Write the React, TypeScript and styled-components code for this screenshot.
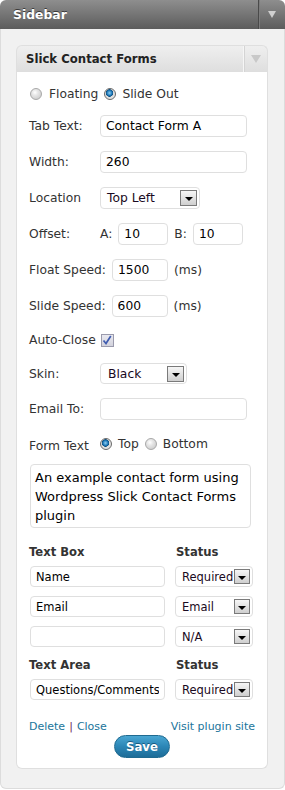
import React from "react";
import styled, { createGlobalStyle } from "styled-components";

const Global = createGlobalStyle`
  html, body { margin: 0; padding: 0; background: #fff; }
  body { font-family: "DejaVu Sans", Verdana, sans-serif; color: #333; }
  * { box-sizing: border-box; }
`;

const Outer = styled.div`
  width: 285px;
  display: flex;
  flex-direction: column;
`;

const OuterHeader = styled.div`
  height: 29px;
  display: flex;
  align-items: stretch;
  background: linear-gradient(#8e8e8e, #5c5c5c);
  border-radius: 6px 6px 0 0;
`;

const OuterTitle = styled.div`
  flex: 1;
  display: flex;
  align-items: center;
  padding-left: 13px;
  color: #fff;
  font-weight: bold;
  font-size: 12.4px;
  text-shadow: 0 -1px 0 #3a3a3a;
`;

const HeaderToggle = styled.div<{ $light?: boolean }>`
  width: ${(p) => (p.$light ? 24 : 27)}px;
  display: flex;
  align-items: center;
  justify-content: center;
  border-left: 1px solid ${(p) => (p.$light ? "#f6f6f6" : "#4a4a4a")};
  box-shadow: inset 1px 0 0 ${(p) => (p.$light ? "#d4d4d4" : "#7c7c7c")};
`;

const Triangle = styled.span<{ $color: string; $w: number; $h: number }>`
  width: 0;
  height: 0;
  border-left: ${(p) => p.$w / 2}px solid transparent;
  border-right: ${(p) => p.$w / 2}px solid transparent;
  border-top: ${(p) => p.$h}px solid ${(p) => p.$color};
`;

const OuterBody = styled.div`
  background: #f1f1f1;
  border: 1px solid #dcdcdc;
  border-top: none;
  border-radius: 0 0 6px 6px;
  padding: 16px 16px 19px 15px;
`;

const Widget = styled.div`
  width: 252px;
  display: flex;
  flex-direction: column;
`;

const WidgetTitle = styled.div`
  height: 27px;
  display: flex;
  align-items: stretch;
  background: linear-gradient(#efefef, #dedede);
  border: 1px solid #dfdfdf;
  border-bottom: none;
  border-radius: 6px 6px 0 0;
`;

const WidgetTitleText = styled.div`
  flex: 1;
  display: flex;
  align-items: center;
  padding-left: 9px;
  font-weight: bold;
  font-size: 11.7px;
  color: #222;
`;

const WidgetBody = styled.div`
  background: #fff;
  border: 1px solid #dfdfdf;
  border-top: none;
  border-radius: 0 0 6px 6px;
  padding: 11px 0 10px 12px;
  display: flex;
  flex-direction: column;
`;

const Row = styled.div<{ $h?: number; $mt?: number }>`
  display: flex;
  align-items: center;
  height: ${(p) => p.$h ?? 22}px;
  margin-top: ${(p) => p.$mt ?? 14}px;
  font-size: 12.3px;
  color: #333;
`;

const Label = styled.span<{ $w?: number }>`
  width: ${(p) => (p.$w ? `${p.$w}px` : "auto")};
  flex: none;
  margin-right: ${(p) => (p.$w ? 0 : 6)}px;
  white-space: nowrap;
`;

const Text = styled.span<{ $ml?: number; $mr?: number }>`
  margin-left: ${(p) => p.$ml ?? 0}px;
  margin-right: ${(p) => p.$mr ?? 0}px;
  white-space: nowrap;
`;

const Input = styled.input<{ $w: number; $h?: number; $fs?: number }>`
  width: ${(p) => p.$w}px;
  height: ${(p) => p.$h ?? 22}px;
  border: 1px solid #dfdfdf;
  border-radius: 4px;
  padding: 0 5px;
  font-family: "DejaVu Sans", Verdana, sans-serif;
  font-size: ${(p) => p.$fs ?? 12.3}px;
  color: #000;
  background: #fff;
  outline: none;
  margin: 0;
`;

const SelectBox = styled.div<{ $w: number; $h?: number; $fs?: number; $pl?: number }>`
  width: ${(p) => p.$w}px;
  height: ${(p) => p.$h ?? 22}px;
  border: 1px solid #dfdfdf;
  border-radius: 4px;
  display: flex;
  align-items: center;
  justify-content: space-between;
  padding: 0 2px 0 ${(p) => p.$pl ?? 6}px;
  font-size: ${(p) => p.$fs ?? 12.3}px;
  color: #1a0a22;
  background: #fff;
  white-space: nowrap;
`;

const ArrowBtn = styled.span<{ $w: number; $h: number }>`
  width: ${(p) => p.$w}px;
  height: ${(p) => p.$h}px;
  flex: none;
  border: 1px solid #7a7a7a;
  background: linear-gradient(#f6f6f6, #cfcfcf);
  display: flex;
  align-items: center;
  justify-content: center;
  padding-top: 2px;
`;

const Radio = styled.span<{ $on?: boolean }>`
  width: 12px;
  height: 12px;
  flex: none;
  border-radius: 50%;
  border: 1px solid ${(p) => (p.$on ? "#6a6a6a" : "#a8a8a8")};
  background: ${(p) =>
    p.$on
      ? "radial-gradient(circle at 45% 40%, #8fd0f4 0, #1e78b8 2.5px, #0d4f80 3.5px, #dcdcdc 4px, #f4f4f4 100%)"
      : "radial-gradient(circle at 40% 35%, #ffffff 0, #e6e6e6 3px, #c4c4c4 100%)"};
`;

const Check = styled.span`
  width: 13px;
  height: 13px;
  flex: none;
  border: 1px solid #9a9aac;
  background: linear-gradient(#e9e9f0, #d2d2dc);
  display: flex;
  align-items: center;
  justify-content: center;
`;

const TextArea = styled.textarea`
  width: 221px;
  height: 64px;
  margin: 10px 0 0 1px;
  border: 1px solid #dfdfdf;
  border-radius: 4px;
  padding: 3px 4px;
  font-family: "DejaVu Sans", Verdana, sans-serif;
  font-size: 13px;
  line-height: 19px;
  color: #000;
  resize: none;
  overflow: hidden;
  outline: none;
  display: block;
`;

const Table = styled.div`
  display: grid;
  grid-template-columns: 135px 78px;
  column-gap: 10px;
  margin-left: 1px;
  align-items: center;
`;

const ColHead = styled.div<{ $mt: number; $ml?: number }>`
  font-weight: bold;
  font-size: 11.6px;
  color: #333;
  height: 18px;
  display: flex;
  align-items: center;
  margin-top: ${(p) => p.$mt}px;
  margin-left: ${(p) => p.$ml ?? -1}px;
  margin-bottom: 5px;
`;

const Cell = styled.div`
  margin-bottom: 9px;
  display: flex;
`;

const Footer = styled.div`
  display: flex;
  justify-content: space-between;
  align-items: center;
  height: 14px;
  margin-top: 10px;
  padding-right: 12px;
  font-size: 11px;
`;

const Link = styled.a`
  color: #21759b;
  text-decoration: none;
`;

const Sep = styled.span`
  color: #6b2d5c;
  margin: 0 4px;
`;

const SaveWrap = styled.div`
  display: flex;
  justify-content: center;
  margin: 2px 0 0 -12px;
`;

const SaveButton = styled.button`
  width: 56px;
  height: 23px;
  border-radius: 12px;
  border: 1px solid #1f6a90;
  background: linear-gradient(#4aa6d2, #2b86b6 50%, #1d6c98);
  color: #fff;
  font-family: "DejaVu Sans", Verdana, sans-serif;
  font-weight: bold;
  font-size: 11.7px;
  text-shadow: 0 -1px 0 #1a5a80;
  padding: 0;
`;

const ArrowIcon = ({ w, h }: { w: number; h: number }) => (
  <ArrowBtn $w={w} $h={h}>
    <Triangle $color="#000" $w={8} $h={4} />
  </ArrowBtn>
);

const Select = ({ w, value, h, fs, pl, aw, ah }: { w: number; value: string; h?: number; fs?: number; pl?: number; aw: number; ah: number }) => (
  <SelectBox $w={w} $h={h} $fs={fs} $pl={pl}>
    <span>{value}</span>
    <ArrowIcon w={aw} h={ah} />
  </SelectBox>
);

export default function App() {
  return (
    <>
      <Global />
      <Outer>
        <OuterHeader>
          <OuterTitle>Sidebar</OuterTitle>
          <HeaderToggle>
            <Triangle $color="#cfcfcf" $w={9} $h={7} />
          </HeaderToggle>
        </OuterHeader>
        <OuterBody>
          <Widget>
            <WidgetTitle>
              <WidgetTitleText>Slick Contact Forms</WidgetTitleText>
              <HeaderToggle $light>
                <Triangle $color="#c8c8c8" $w={10} $h={8} />
              </HeaderToggle>
            </WidgetTitle>
            <WidgetBody>
              <Row $mt={0} style={{ marginLeft: 1 }}>
                <Radio />
                <Text $ml={7}>Floating</Text>
                <Radio style={{ marginLeft: 6 }} $on />
                <Text $ml={6}>Slide Out</Text>
              </Row>
              <Row $mt={10}>
                <Label $w={71}>Tab Text:</Label>
                <Input $w={147} defaultValue="Contact Form A" />
              </Row>
              <Row>
                <Label $w={71}>Width:</Label>
                <Input $w={147} defaultValue="260" />
              </Row>
              <Row>
                <Label $w={71}>Location</Label>
                <Select w={100} value="Top Left" aw={17} ah={16} />
              </Row>
              <Row>
                <Label $w={71}>Offset:</Label>
                <Text $mr={6}>A:</Text>
                <Input $w={50} defaultValue="10" />
                <Text $ml={6} $mr={6}>B:</Text>
                <Input $w={50} defaultValue="10" />
              </Row>
              <Row>
                <Label>Float Speed:</Label>
                <Input $w={56} defaultValue="1500" />
                <Text $ml={6}>(ms)</Text>
              </Row>
              <Row>
                <Label>Slide Speed:</Label>
                <Input $w={56} defaultValue="600" />
                <Text $ml={6}>(ms)</Text>
              </Row>
              <Row $h={18} $mt={14}>
                <Text $mr={5}>Auto-Close</Text>
                <Check>
                  <svg width="10" height="10" viewBox="0 0 10 10">
                    <path d="M1.5 5.5 L4 8.5 L8.8 1" fill="none" stroke="#3f5cb0" strokeWidth="1.7" />
                  </svg>
                </Check>
              </Row>
              <Row $h={21} $mt={14}>
                <Label $w={71}>Skin:</Label>
                <Select w={87} h={21} value="Black" pl={7} aw={17} ah={16} />
              </Row>
              <Row $mt={14}>
                <Label $w={71}>Email To:</Label>
                <Input $w={147} defaultValue="" />
              </Row>
              <Row $h={20} $mt={14}>
                <Label $w={71} style={{ paddingTop: 4 }}>Form Text</Label>
                <Radio $on />
                <Text $ml={6}>Top</Text>
                <Radio style={{ marginLeft: 6 }} />
                <Text $ml={6}>Bottom</Text>
              </Row>
              <TextArea readOnly defaultValue="An example contact form using Wordpress Slick Contact Forms plugin" />
              <Table>
                <ColHead $mt={15}>Text Box</ColHead>
                <ColHead $mt={15} $ml={1}>Status</ColHead>
                <Cell>
                  <Input $w={135} $h={21} $fs={11.5} defaultValue="Name" />
                </Cell>
                <Cell>
                  <Select w={78} h={21} fs={11.5} value="Required" aw={16} ah={15} />
                </Cell>
                <Cell>
                  <Input $w={135} $h={21} $fs={11.5} defaultValue="Email" />
                </Cell>
                <Cell>
                  <Select w={78} h={21} fs={11.5} value="Email" aw={16} ah={15} />
                </Cell>
                <Cell>
                  <Input $w={135} $h={21} $fs={11.5} defaultValue="" />
                </Cell>
                <Cell>
                  <Select w={78} h={21} fs={11.5} value="N/A" aw={16} ah={15} />
                </Cell>
                <ColHead $mt={0}>Text Area</ColHead>
                <ColHead $mt={0} $ml={1}>Status</ColHead>
                <Cell>
                  <Input $w={135} $h={21} $fs={11.5} defaultValue="Questions/Comments" />
                </Cell>
                <Cell>
                  <Select w={78} h={21} fs={11.5} value="Required" aw={16} ah={15} />
                </Cell>
              </Table>
              <Footer>
                <span>
                  <Link href="#">Delete</Link>
                  <Sep>|</Sep>
                  <Link href="#">Close</Link>
                </span>
                <Link href="#">Visit plugin site</Link>
              </Footer>
              <SaveWrap>
                <SaveButton>Save</SaveButton>
              </SaveWrap>
            </WidgetBody>
          </Widget>
        </OuterBody>
      </Outer>
    </>
  );
}
